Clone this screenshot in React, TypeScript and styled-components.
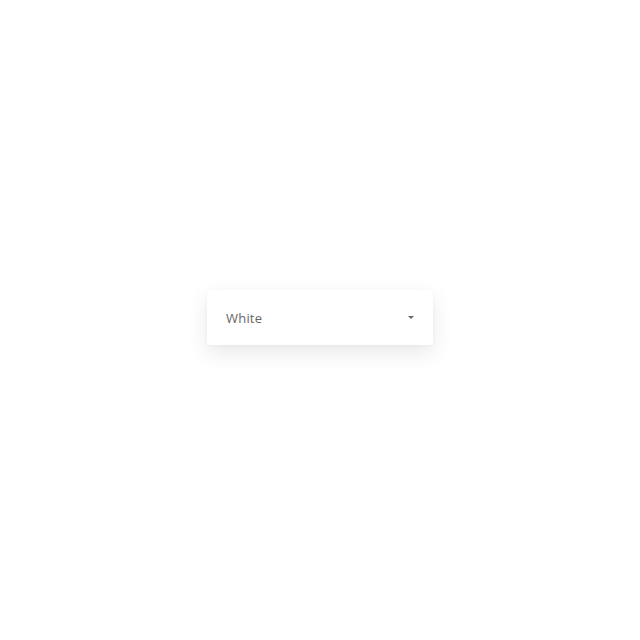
import React from "react";
import styled, { createGlobalStyle } from "styled-components";

const Global = createGlobalStyle`
  html, body { margin: 0; padding: 0; background: #ffffff; }
  body { font-family: "Open Sans", "Liberation Sans", sans-serif; }
`;

const Page = styled.div`
  width: 640px;
  height: 640px;
  display: flex;
  align-items: center;
  justify-content: center;
`;

const Select = styled.div`
  width: 226px;
  height: 55px;
  margin-top: -5px;
  box-sizing: border-box;
  padding: 0 19px 0 19px;
  display: flex;
  align-items: center;
  justify-content: space-between;
  background: #ffffff;
  border-radius: 3px;
  box-shadow: 0 8px 22px rgba(0, 0, 0, 0.09), 0 1px 4px rgba(0, 0, 0, 0.04);
`;

const Label = styled.span`
  font-size: 13px;
  color: #666666;
  letter-spacing: 0.2px;
`;

const Caret = styled.span`
  width: 0;
  height: 0;
  border-left: 3px solid transparent;
  border-right: 3px solid transparent;
  border-top: 3px solid #666666;
`;

export default function App() {
  return (
    <Page>
      <Global />
      <Select>
        <Label>White</Label>
        <Caret />
      </Select>
    </Page>
  );
}
